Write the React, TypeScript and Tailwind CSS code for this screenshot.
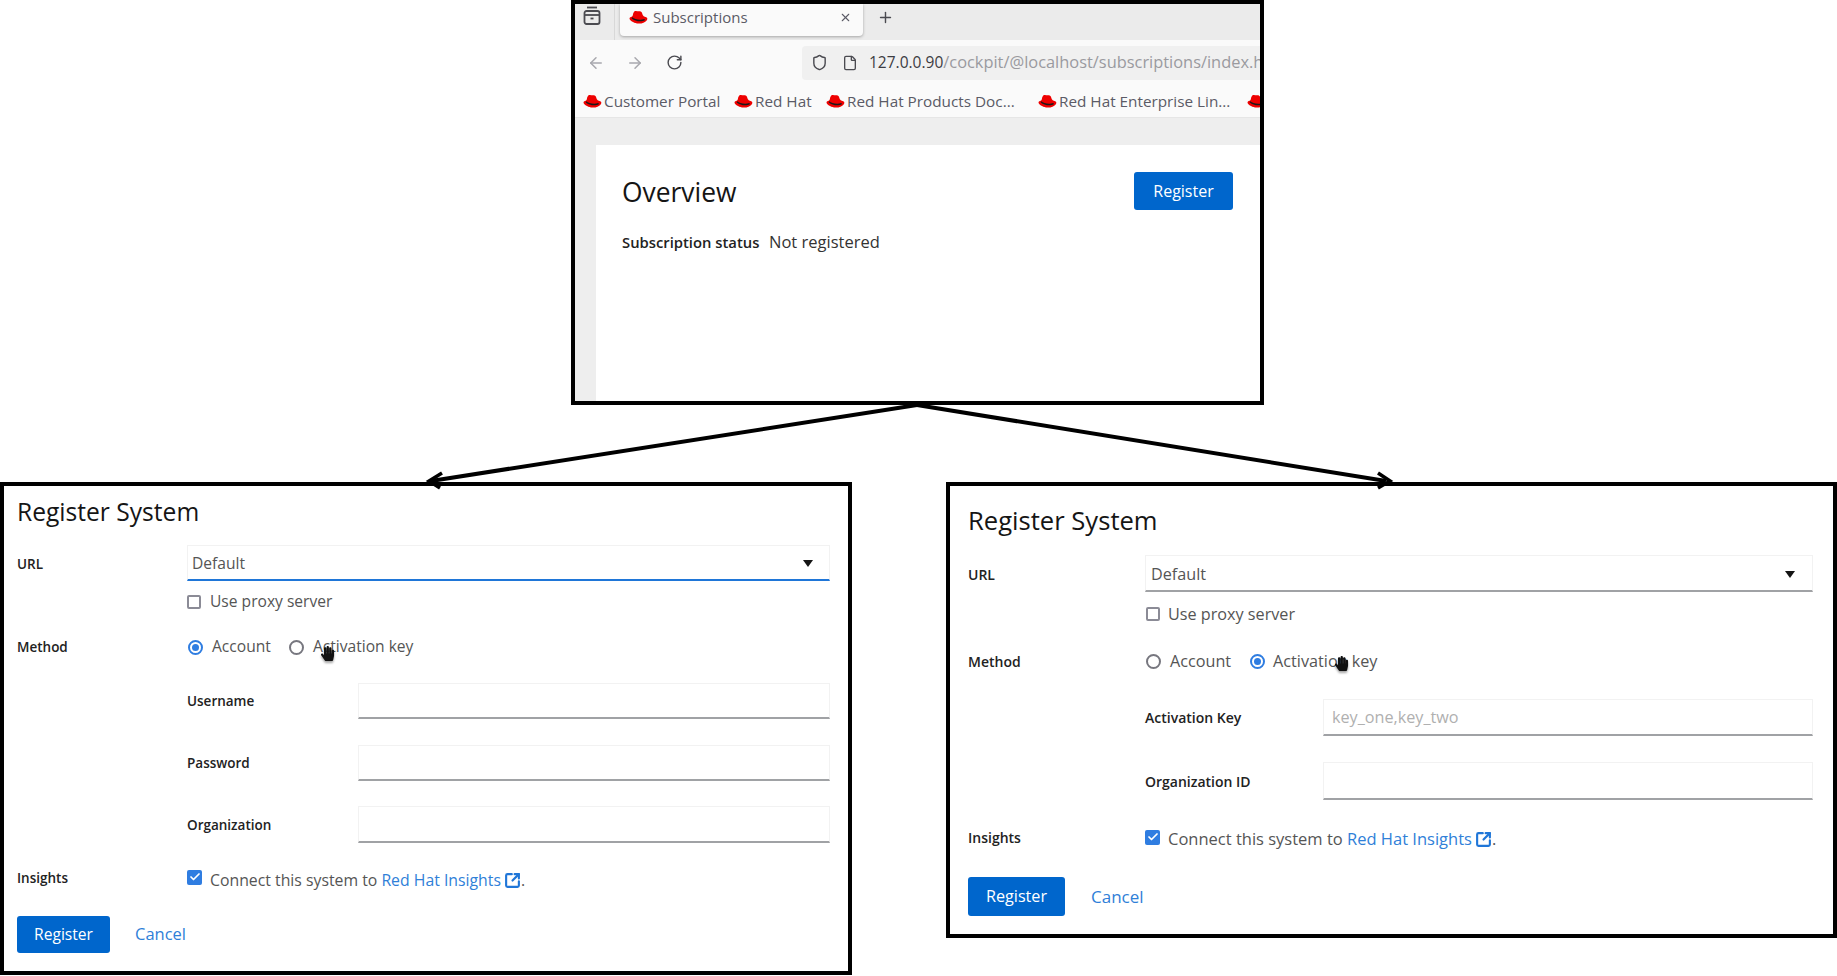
import React from "react";
import { ArrowLeft, ArrowRight, RotateCw, Shield, File, Plus, X, SquareArrowOutUpRight, Check } from "lucide-react";
import { FaHandPaper } from "react-icons/fa";

const FONT = "font-['Open_Sans',sans-serif]";

function Hat({ className = "" }: { className?: string }) {
  return (
    <svg viewBox="0 0 20 16" className={className}>
      <path d="M5.500 1.600C7 .4 9 1.600 11 1.400c1.600-.2 2.800.9 3.200 3 .3 1.600 2 2.600 4 3.400 1.500.6 1.600 2 .5 3.300-1.700 2-5 3.600-8.800 3.400C6 14.300 1.700 12 .6 9.900.1 8.800.7 7.600 2.400 7.200c.8-.2 1.300-.9 1.600-2 .3-1.500.7-2.800 1.500-3.600z" fill="#ee0000" />
      <path d="M3.300 7.800c2.500 2.200 8.500 3.700 12.800 1.900.6.400.8.9.6 1.200-3.800 2.200-10.600 1-13.800-1.900-.2-.5 0-.9.4-1.200z" fill="#1a1a1a" />
    </svg>
  );
}

function Bookmark({ label, w, ml }: { label: string; w: string; ml: string }) {
  return (
    <div className={`flex items-center shrink-0 ${ml}`}>
      <Hat className="w-[19px] h-[15px] shrink-0" />
      <span className={`ml-[2px] text-[15.3px] text-[#5b5b66] whitespace-nowrap ${w}`}>{label}</span>
    </div>
  );
}

function Checkbox({ checked, className = "" }: { checked?: boolean; className?: string }) {
  return checked ? (
    <span className={`flex items-center justify-center w-[15px] h-[15px] rounded-[2px] bg-[#2f7de1] shrink-0 ${className}`}>
      <Check size={12} strokeWidth={3.5} color="#fff" />
    </span>
  ) : (
    <span className={`block w-[14px] h-[14px] rounded-[2px] border-2 border-[#8b8b96] bg-white shrink-0 ${className}`} />
  );
}

function Radio({ on }: { on?: boolean }) {
  return on ? (
    <span className="flex items-center justify-center w-[15px] h-[15px] rounded-full border-2 border-[#2f7de1] shrink-0">
      <span className="block w-[7px] h-[7px] rounded-full bg-[#2f7de1]" />
    </span>
  ) : (
    <span className="block w-[15px] h-[15px] rounded-full border-2 border-[#77777f] shrink-0" />
  );
}

function Caret() {
  return (
    <svg width="10" height="7" viewBox="0 0 10 7"><path d="M0 0h10L5 7z" fill="#151515" /></svg>
  );
}

function HandCursor({ className = "" }: { className?: string }) {
  return (
    <span className={`absolute drop-shadow-[0_2px_1px_rgba(0,0,0,0.35)] ${className}`}>
      <FaHandPaper size={15} color="#111" />
    </span>
  );
}

function Insights({ textSize }: { textSize: string }) {
  return (
    <span className={`${textSize} text-[#555] whitespace-nowrap flex items-center`}>
      Connect this system to&nbsp;
      <span className="text-[#2f80d8]">Red Hat Insights</span>
      <SquareArrowOutUpRight size={17} strokeWidth={3} color="#1f76d8" className="ml-[3px]" />
      .
    </span>
  );
}

function LeftPanel() {
  const t = "text-[15.6px]";
  const label = "text-[13.5px] font-semibold text-[#222]";
  const Input = () => <div className="flex-1 h-full bg-white border border-[#f2f2f2] border-b-2 border-b-[#a0a2a5]" />;
  return (
    <section className="w-[852px] h-[493px] border-4 border-black bg-white pl-[13px] pr-[18px] shrink-0">
      <h2 className="h-[52px] flex items-center text-[24.6px] font-medium text-[#151515]">Register System</h2>
      <div className="flex mt-[7px] h-[36px] items-center">
        <span className={`w-[170px] pt-[2px] ${label}`}>URL</span>
        <div className={`flex-1 h-full flex items-center justify-between pl-[4px] pr-[16px] pt-[2px] border border-[#f2f2f2] border-b-2 border-b-[#1f76d8] ${t} text-[#555]`}>
          Default <Caret />
        </div>
      </div>
      <div className="flex mt-[14px] h-[14px] items-center pl-[170px]">
        <Checkbox />
        <span className={`ml-[9px] ${t} text-[#555]`}>Use proxy server</span>
      </div>
      <div className="relative flex mt-[28px] h-[20px] items-center">
        <span className={`w-[170px] ${label}`}>Method</span>
        <span className="ml-[1px]"><Radio on /></span>
        <span className={`ml-[9px] ${t} text-[#555]`}>Account</span>
        <span className="ml-[18px]"><Radio /></span>
        <span className={`ml-[9px] ${t} text-[#555]`}>Activation key</span>
        <HandCursor className="left-[303px] top-[9px]" />
      </div>
      {[
        ["Username", "mt-[26px] h-[36px]"],
        ["Password", "mt-[26px] h-[36px]"],
        ["Organization", "mt-[25px] h-[37px]"],
      ].map(([name, cls]) => (
        <div key={name} className={`flex items-center pl-[170px] ${cls}`}>
          <span className={`w-[171px] pt-[1px] ${label}`}>{name}</span>
          <Input />
        </div>
      ))}
      <div className="flex mt-[26px] h-[20px] items-center">
        <span className={`w-[170px] -mt-[2px] ${label}`}>Insights</span>
        <Checkbox checked className="-mt-[4px]" />
        <span className="ml-[8px] pt-[3px]"><Insights textSize="text-[15.8px]" /></span>
      </div>
      <div className="flex mt-[27px] h-[37px] items-center">
        <button className={`w-[93px] h-full rounded-[3px] bg-[#0066cc] text-white ${t}`}>Register</button>
        <span className={`ml-[25px] text-[16.5px] text-[#2f80d8]`}>Cancel</span>
      </div>
    </section>
  );
}

function RightPanel() {
  const t = "text-[16.2px]";
  const label = "text-[14px] font-semibold text-[#222]";
  return (
    <section className="w-[891px] h-[456px] border-4 border-black bg-white pl-[18px] pr-[20px] shrink-0">
      <h2 className="h-[70px] flex items-center text-[25.6px] font-medium text-[#151515]">Register System</h2>
      <div className="flex -mt-[1px] h-[37px] items-center">
        <span className={`w-[177px] pt-[2px] ${label}`}>URL</span>
        <div className={`flex-1 h-full flex items-center justify-between pl-[5px] pr-[17px] pt-[2px] border border-[#f2f2f2] border-b-2 border-b-[#a0a2a5] ${t} text-[#555]`}>
          Default <Caret />
        </div>
      </div>
      <div className="flex mt-[14px] h-[16px] items-center pl-[177px]">
        <Checkbox className="ml-[1px]" />
        <span className={`ml-[8px] ${t} text-[#555]`}>Use proxy server</span>
      </div>
      <div className="relative flex mt-[29px] h-[20px] items-center">
        <span className={`w-[177px] ${label}`}>Method</span>
        <span className="ml-[1px]"><Radio /></span>
        <span className={`ml-[9px] ${t} text-[#555]`}>Account</span>
        <span className="ml-[19px]"><Radio on /></span>
        <span className={`ml-[8px] ${t} text-[#555]`}>Activation key</span>
        <HandCursor className="left-[366px] top-[5px]" />
      </div>
      <div className="flex mt-[28px] h-[37px] items-center pl-[177px]">
        <span className={`w-[178px] ${label}`}>Activation Key</span>
        <div className={`flex-1 h-full flex items-center pl-[8px] pt-[1px] border border-[#f2f2f2] border-b-2 border-b-[#a0a2a5] ${t} text-[#b0b0b0]`}>key_one,key_two</div>
      </div>
      <div className="flex mt-[26px] h-[38px] items-center pl-[177px]">
        <span className={`w-[178px] ${label}`}>Organization ID</span>
        <div className="flex-1 h-full border border-[#f2f2f2] border-b-2 border-b-[#a0a2a5]" />
      </div>
      <div className="flex mt-[29px] h-[20px] items-center">
        <span className={`w-[177px] -mt-[4px] ${label}`}>Insights</span>
        <Checkbox checked className="-mt-[4px]" />
        <span className="ml-[8px] pt-[1px]"><Insights textSize="text-[16.5px]" /></span>
      </div>
      <div className="flex mt-[28px] h-[39px] items-center">
        <button className={`w-[97px] h-full rounded-[3px] bg-[#0066cc] text-white ${t}`}>Register</button>
        <span className={`ml-[26px] pt-[1px] text-[17px] text-[#2f80d8]`}>Cancel</span>
      </div>
    </section>
  );
}

function BrowserWindow() {
  return (
    <section className="w-[693px] h-[405px] ml-[571px] border-4 border-black bg-[#eeeeee] overflow-hidden flex flex-col">
      <div className="h-[36px] shrink-0 bg-[#ebebeb] flex items-start pl-[8px]">
        <svg width="18" height="20" viewBox="0 0 18 20" fill="none" stroke="#4a4a50" strokeWidth="1.8" className="mt-[2px] shrink-0">
          <path d="M4 1.500h10" />
          <rect x="1.500" y="5" width="15" height="13" rx="2" />
          <path d="M1.500 9h15" />
          <path d="M7.500 12.500h3" />
        </svg>
        <div className="w-px h-[36px] bg-[#d8d8d8] ml-[13px] shrink-0" />
        <div className="ml-[5px] w-[243px] h-[32px] rounded-b-[4px] bg-[#fafafa] shadow-[0_1px_3px_rgba(0,0,0,0.3)] flex items-center pl-[9px] pr-[11px] pb-[5px] shrink-0">
          <Hat className="w-[19px] h-[15px] shrink-0" />
          <span className="ml-[5px] text-[15px] text-[#5b5b66] flex-1">Subscriptions</span>
          <X size={13} color="#5b5b66" />
        </div>
        <Plus size={17} color="#4a4a50" className="ml-[14px] mt-[5px] shrink-0" />
      </div>
      <div className="h-[40px] shrink-0 bg-[#fafafa] flex items-center pl-[12px] pt-[5px]">
        <ArrowLeft size={18} color="#a8a8ae" />
        <ArrowRight size={18} color="#a8a8ae" className="ml-[21px]" />
        <RotateCw size={17} color="#4a4a50" className="ml-[22px]" />
        <div className="ml-[119px] flex-1 h-[34px] rounded-l-[4px] bg-[#f0f0f0] flex items-center pl-[9px] overflow-hidden">
          <Shield size={17} color="#4a4a50" className="shrink-0" />
          <File size={16} color="#4a4a50" className="ml-[14px] shrink-0" />
          <span className="ml-[11px] text-[16.4px] text-[#9a9a9f] whitespace-nowrap"><span className="text-[15.5px] text-[#3c3c42]">127.0.0.90</span>/cockpit/@localhost/subscriptions/index.html</span>
        </div>
      </div>
      <div className="h-[38px] shrink-0 bg-[#fafafa] border-b border-[#e6e6e6] flex items-center pl-[8px] pt-[6px] overflow-hidden">
        <Bookmark label="Customer Portal" w="w-[118px]" ml="" />
        <Bookmark label="Red Hat" w="w-[58px]" ml="ml-[12px]" />
        <Bookmark label="Red Hat Products Doc..." w="w-[172px]" ml="ml-[13px]" />
        <Bookmark label="Red Hat Enterprise Lin..." w="w-[173px]" ml="ml-[19px]" />
        <Hat className="ml-[15px] w-[19px] h-[15px] shrink-0" />
      </div>
      <div className="flex-1 pt-[27px] pl-[21px] pr-0 min-h-0">
        <div className="h-full bg-white pl-[26px] pr-[27px] pt-[26px]">
          <div className="flex items-center justify-between h-[40px]">
            <h1 className="pt-[3px] text-[26.4px] font-medium text-[#151515]">Overview</h1>
            <button className="w-[99px] h-[38px] rounded-[3px] bg-[#0066cc] text-white text-[16px]">Register</button>
          </div>
          <div className="flex items-center mt-[19px]">
            <span className="w-[148px] text-[14.8px] font-semibold text-[#222] whitespace-nowrap">Subscription status</span>
            <span className="ml-[-1px] text-[16.5px] text-[#333]">Not registered</span>
          </div>
        </div>
      </div>
    </section>
  );
}

export default function App() {
  return (
    <div className={`relative w-[1837px] h-[976px] bg-white overflow-hidden ${FONT}`}>
      <BrowserWindow />
      <div className="flex mt-[77px]">
        <LeftPanel />
        <div className="ml-[94px]"><RightPanel /></div>
      </div>
      <svg className="absolute left-0 top-0 pointer-events-none" width="1837" height="976" fill="none" stroke="#000" strokeWidth="4">
        <path d="M917 405L431 481" />
        <path d="M917 405L1386 481" />
        <path d="M442 473L429 481L440 488" strokeWidth="3.5" />
        <path d="M1378 473L1390 481L1378 488" strokeWidth="3.5" />
      </svg>
    </div>
  );
}
